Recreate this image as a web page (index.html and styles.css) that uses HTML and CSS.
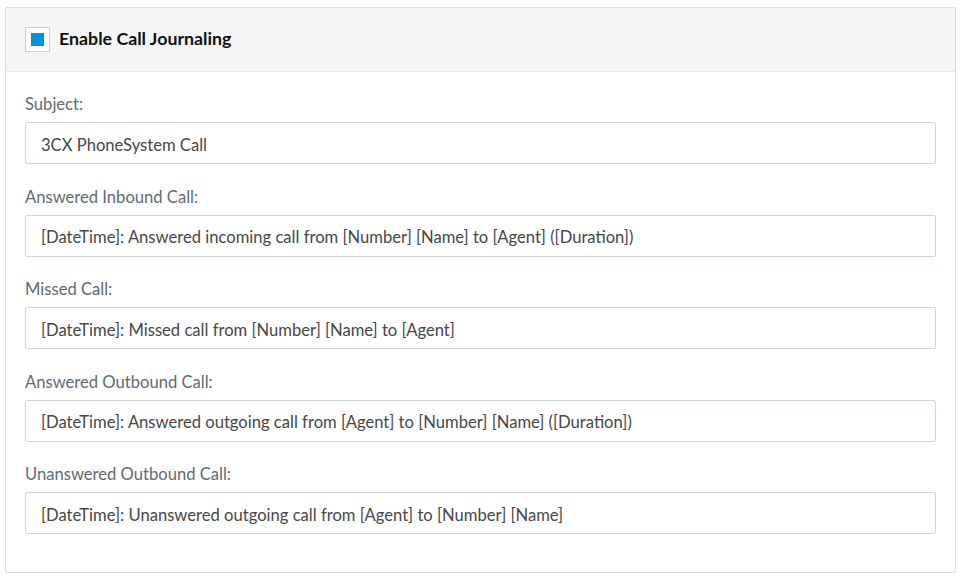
FILE: index.html
```html
<!DOCTYPE html>
<html lang="en">
<head>
    <meta charset="UTF-8">
    <meta name="viewport" content="width=device-width, initial-scale=1.0">
    <title>Call Journaling</title>
    <link rel="stylesheet" href="styles.css">
</head>
<body>

    <section class="panel">
        <header class="panel-header">
            <label class="check">
                <span class="check-box"><span class="check-mark"></span></span>
                <span class="check-label">Enable Call Journaling</span>
            </label>
        </header>

        <div class="panel-body">
            <div class="field">
                <label for="subject">Subject:</label>
                <input type="text" id="subject" value="3CX PhoneSystem Call">
            </div>
            <div class="field">
                <label for="inbound">Answered Inbound Call:</label>
                <input type="text" id="inbound" value="[DateTime]: Answered incoming call from [Number] [Name] to [Agent] ([Duration])">
            </div>
            <div class="field">
                <label for="missed">Missed Call:</label>
                <input type="text" id="missed" value="[DateTime]: Missed call from [Number] [Name] to [Agent]">
            </div>
            <div class="field">
                <label for="outbound">Answered Outbound Call:</label>
                <input type="text" id="outbound" value="[DateTime]: Answered outgoing call from [Agent] to [Number] [Name] ([Duration])">
            </div>
            <div class="field">
                <label for="unanswered">Unanswered Outbound Call:</label>
                <input type="text" id="unanswered" value="[DateTime]: Unanswered outgoing call from [Agent] to [Number] [Name]">
            </div>
        </div>
    </section>

</body>
</html>
```

FILE: styles.css
```css
/* General */
body {
    font-family: 'Lato', sans-serif;
    background: #fff;
    color: #555;
    margin: 0;
    padding: 7px 7px 10px 5px;
}

/* Panel */
.panel {
    border: 1px solid #dde0e0;
    border-radius: 2px;
    background: #fff;
}

.panel-header {
    background: #f4f6f6;
    border-bottom: 1px solid #e3e7e7;
    height: 63px;
    padding: 0 19px;
    display: flex;
    align-items: center;
}

.check {
    display: flex;
    align-items: center;
    gap: 9px;
}

.check-box {
    width: 23px;
    height: 23px;
    border: 1px solid #cdd3d3;
    background: #fff;
    display: flex;
    align-items: center;
    justify-content: center;
}

.check-mark {
    width: 13px;
    height: 13px;
    background: #0096d6;
}

.check-label {
    font-weight: bold;
    font-size: 17.8px;
    color: #111;
    padding-bottom: 3px;
}

/* Fields */
.panel-body {
    padding: 22px 19px 15px;
}

.field {
    display: flex;
    flex-direction: column;
    margin-bottom: 22.5px;
}

.field label {
    font-size: 16.6px;
    line-height: 20px;
    margin-bottom: 8px;
    color: #626a70;
}

.field input {
    height: 42px;
    box-sizing: border-box;
    border: 1px solid #cdd9d9;
    border-radius: 2px;
    padding: 3px 15px 0;
    font-family: inherit;
    font-size: 16.6px;
    color: #474747;
    background: #fff;
}
```
